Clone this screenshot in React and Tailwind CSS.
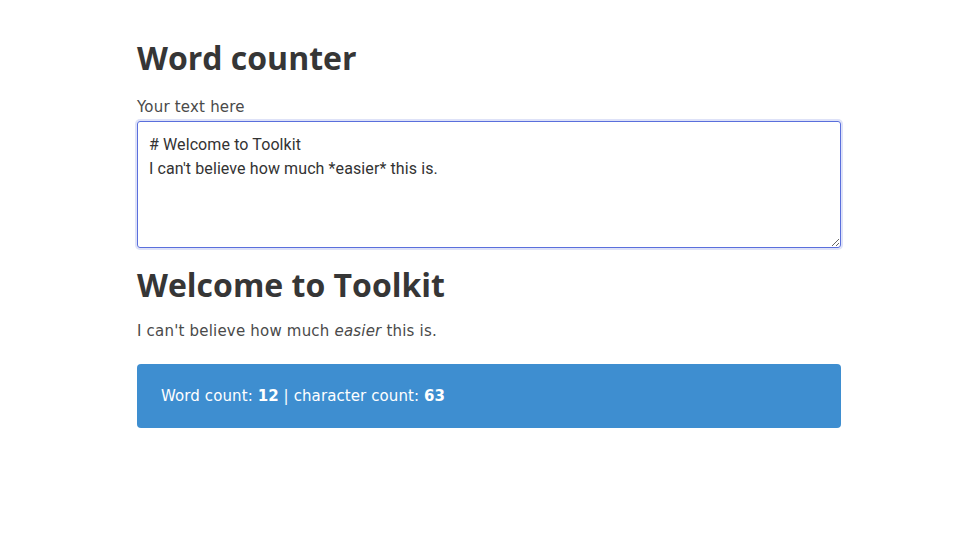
import React, { useState } from 'react';

const countWords = (text) => text.trim().split(/\s+/).filter(Boolean).length;

const App = () => {
  const [text, setText] = useState("# Welcome to Toolkit\nI can't believe how much *easier* this is.");

  return (
    <div className="min-h-screen bg-white text-[#363636] font-['DejaVu_Sans',sans-serif]">
      <div className="ml-[137px] w-[704px] pt-[37px]">
        <h2 className="text-[32px] font-bold leading-[42px] font-['Open_Sans',sans-serif]">Word counter</h2>
        <label className="block mt-[17px] text-[15px] leading-[22px] tracking-[0.2px] text-[#4a4a4a]">Your text here</label>
        <textarea
          className="block w-full h-[127px] mt-[3px] rounded-[3px] border border-[#5a6fdc] ring-2 ring-[#5a6fdc]/20 px-[11px] pt-[11px] pb-[10px] text-[16px] leading-[24px] tracking-[0.1px] text-[#333] font-['Roboto',sans-serif] outline-none"
          value={text}
          onChange={(e) => setText(e.target.value)}
        />
        <h1 className="mt-[16px] text-[32px] font-bold leading-[42px] font-['Open_Sans',sans-serif]">Welcome to Toolkit</h1>
        <p className="mt-[14px] text-[15px] leading-[22px] tracking-[0.2px] text-[#4a4a4a]">
          I can't believe how much <em>easier</em> this is.
        </p>
        <div className="mt-[22px] h-[64px] rounded-[4px] bg-[#3e8ed0] px-[24px] flex items-center text-white text-[15px] tracking-[0.1px]">
          <span>
            Word count: <strong>{countWords(text)}</strong> | character count: <strong>{text.length}</strong>
          </span>
        </div>
      </div>
    </div>
  );
};

export default App;
